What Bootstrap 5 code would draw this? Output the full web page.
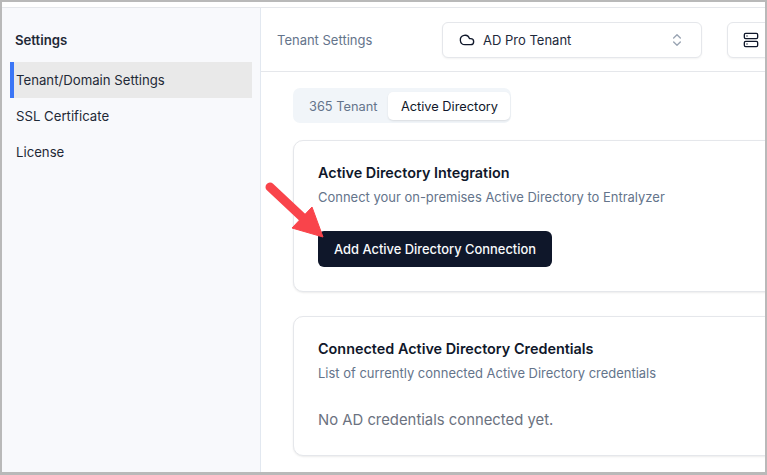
<!DOCTYPE html>
<html lang="en"><head><meta charset="utf-8"><title>Tenant Settings</title>
<link href="https://cdn.jsdelivr.net/npm/bootstrap@5.3.0/dist/css/bootstrap.min.css" rel="stylesheet">
<style>
html,body{height:100%;margin:0;overflow:hidden}
body{font-family:Inter,"Noto Sans",sans-serif;background:#fff;color:#0f172a;font-size:14px}
.frame{width:767px;height:475px;border:2px solid #b9b9b9;border-bottom-width:3px;overflow:hidden;position:relative;background:#fff;display:flex;flex-direction:column}
.topstrip{height:6px;flex:none;border-bottom:1px solid #e5e7eb}
.shell{flex:1;min-height:0;display:flex}
.side{width:259px;flex:none;background:#f8f9fc;border-right:1px solid #e2e8f0;padding:22px 8px 0 8px}
.side-title{font-size:13.2px;font-weight:600;line-height:20px;padding-left:5px;margin-bottom:12px;color:#1f2937}
.side-link{display:block;height:36px;line-height:36px;font-size:13.2px;color:#1f2937;text-decoration:none;border-left:4px solid transparent;padding-left:2px}
.side-link.on{background:#e9e9e9;border-left-color:#3b76f6}
.main{flex:1;min-width:0;overflow:hidden}
.head{height:64px;border-bottom:1px solid #e5e7eb;padding-left:16px;display:flex;align-items:center}
.head-label{width:165px;flex:none;font-size:13px;line-height:20px;padding-top:1px;color:#64748b}
.picker{width:260px;flex:none;height:36px;border:1px solid #e5e7eb;border-radius:6px;box-shadow:0 1px 2px rgba(0,0,0,.05);display:flex;align-items:center;padding:0 16px;font-size:13px;color:#1e293b;background:#fff}
.picker-name{padding-top:2px}
.chev{opacity:.65}
.iconbtn{width:60px;flex:none;height:36px;margin-left:25px;border:1px solid #e5e7eb;border-radius:6px;box-shadow:0 1px 2px rgba(0,0,0,.05);display:flex;align-items:center;padding-left:15px;background:#fff}
.body-area{padding:16px 0 0 32px;width:540px}
.tabset{display:inline-flex;align-items:center;height:35px;padding:4px 1px 3px 3px;background:#f1f5f9;border-radius:7px;margin-bottom:17px;vertical-align:top}
.tabitem{font-size:12.8px;line-height:27px;height:28px;padding-top:1px;color:#64748b;padding-left:13px;padding-right:10.5px;border-radius:5px}
.tabitem.on{color:#0f172a;background:#fff;box-shadow:0 1px 2px rgba(0,0,0,.1);padding-left:13px;padding-right:12px}
.panel{border:1px solid #e5e7eb;border-radius:10px;box-shadow:0 1px 2px rgba(0,0,0,.08);padding:22px 24px 24px;background:#fff;margin-bottom:24px;width:560px}
.panel-title{font-size:14.4px;font-weight:600;line-height:20px;color:#0f172a}
.panel-sub{font-size:12.97px;line-height:20px;color:#64748b;margin-top:4px}
.cta{display:block;margin-top:24px;height:36px;line-height:34px;padding:1px 16px 0;background:#0f172a;color:#f8fafc;font-size:12.9px;font-weight:500;border-radius:6px;border:0}
.empty{font-size:14.85px;line-height:24px;color:#6b7280;margin-top:25px;margin-bottom:-1px}
.arrow{position:absolute;left:258px;top:176px}
</style></head><body>
<div class="frame">
 <div class="topstrip"></div>
 <div class="shell">
  <aside class="side">
   <div class="side-title">Settings</div>
   <a class="side-link on" href="#">Tenant/Domain Settings</a>
   <a class="side-link" href="#">SSL Certificate</a>
   <a class="side-link" href="#">License</a>
  </aside>
  <main class="main">
   <div class="head">
    <div class="head-label">Tenant Settings</div>
    <div class="picker">
     <svg width="16" height="16" viewBox="0 0 24 24" fill="none" stroke="#0f172a" stroke-width="2" stroke-linecap="round" stroke-linejoin="round" class="me-2 flex-none"><path d="M17.5 19H9a7 7 0 1 1 6.71-9h1.79a4.5 4.5 0 1 1 0 9Z"/></svg>
     <span class="flex-grow-1 picker-name">AD Pro Tenant</span>
     <svg class="chev" width="16" height="16" viewBox="0 0 24 24" fill="none" stroke="#64748b" stroke-width="2" stroke-linecap="round" stroke-linejoin="round"><path d="m7 15 5 5 5-5"/><path d="m7 9 5-5 5 5"/></svg>
    </div>
    <div class="iconbtn">
     <svg width="16" height="16" viewBox="0 0 24 24" fill="none" stroke="#0f172a" stroke-width="2" stroke-linecap="round" stroke-linejoin="round"><rect x="2" y="2" width="20" height="8" rx="2"/><rect x="2" y="14" width="20" height="8" rx="2"/><path d="M6 6h.01"/><path d="M6 18h.01"/></svg>
    </div>
   </div>
   <div class="body-area">
    <div class="tabset"><div class="tabitem">365 Tenant</div><div class="tabitem on">Active Directory</div></div>
    <section class="panel">
     <div class="panel-title">Active Directory Integration</div>
     <div class="panel-sub">Connect your on-premises Active Directory to Entralyzer</div>
     <button class="cta" type="button">Add Active Directory Connection</button>
    </section>
    <section class="panel">
     <div class="panel-title">Connected Active Directory Credentials</div>
     <div class="panel-sub">List of currently connected Active Directory credentials</div>
     <div class="empty">No AD credentials connected yet.</div>
    </section>
   </div>
  </main>
 </div>
 <svg class="arrow" width="70" height="70" viewBox="0 0 70 70"><path d="M10 9 L42 39" stroke="#f9444b" stroke-width="9" stroke-linecap="round" fill="none"/><path d="M52 29 L63 59 L32 50 Z" fill="#f9444b" stroke="#f9444b" stroke-width="1" stroke-linejoin="round"/></svg>
</div>
</body></html>
